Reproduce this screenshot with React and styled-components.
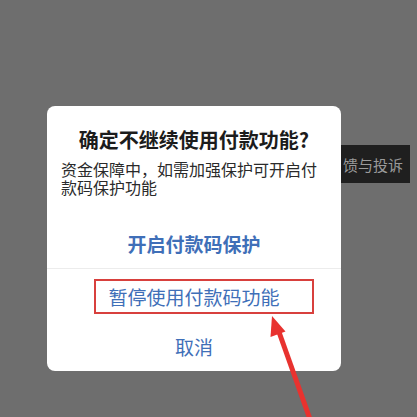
import styled, { createGlobalStyle } from "styled-components";

const GlobalStyle = createGlobalStyle`
  html, body {
    margin: 0;
    padding: 0;
    background: #6e6e6e;
  }
  body {
    font-family: "Noto Sans CJK SC", "Noto Sans", sans-serif;
  }
`;

const Screen = styled.div`
  position: relative;
  width: 417px;
  height: 417px;
  overflow: hidden;
  background: #6e6e6e;
  display: flex;
  align-items: flex-start;
  padding: 106px 0 0 47px;
  box-sizing: border-box;
`;

const Dialog = styled.div`
  width: 294px;
  height: 265px;
  background: #fff;
  border-radius: 8px;
  display: flex;
  flex-direction: column;
  flex-shrink: 0;
`;

const Title = styled.div`
  padding-top: 20px;
  font-size: 20px;
  line-height: 28px;
  font-weight: 700;
  color: #1c1c1c;
  text-align: center;
`;

const Body = styled.div`
  margin-top: 6px;
  padding: 0 14px;
  font-size: 16px;
  line-height: 18px;
  color: #2a2a2a;
`;

const Action = styled.div`
  height: ${(p) => p.$h}px;
  margin-top: ${(p) => p.$mt || 0}px;
  display: flex;
  align-items: center;
  justify-content: center;
  font-size: 19px;
  font-weight: ${(p) => (p.$bold ? 600 : 400)};
  color: #3f6fb8;
  border-top: ${(p) => (p.$divider ? "1px solid #ececec" : "none")};
`;

const Marked = styled.span`
  display: inline-block;
  margin-left: 20px;
  padding: 1px 32px 1px 12px;
  border: 2.5px solid #d8403d;
  line-height: 29px;
`;

const BehindStrip = styled.div`
  margin-top: 39px;
  width: 69px;
  height: 38px;
  background: #1f1f1f;
  color: #9a9a9a;
  font-size: 15px;
  display: flex;
  align-items: center;
  padding-left: 2px;
  box-sizing: border-box;
  white-space: nowrap;
  overflow: hidden;
`;

const Arrow = styled.svg`
  position: absolute;
  left: 0;
  top: 0;
  width: 417px;
  height: 417px;
  pointer-events: none;
`;

export default function App() {
  return (
    <>
      <GlobalStyle />
      <Screen>
        <Dialog>
          <Title>确定不继续使用付款功能?</Title>
          <Body>资金保障中，如需加强保护可开启付款码保护功能</Body>
          <Action $h={50} $mt={22} $bold>
            开启付款码保护
          </Action>
          <Action $h={54} $divider>
            <Marked>暂停使用付款码功能</Marked>
          </Action>
          <Action $h={47}>取消</Action>
        </Dialog>
        <BehindStrip>馈与投诉</BehindStrip>
        <Arrow viewBox="0 0 417 417">
          <line x1="279" y1="332" x2="311" y2="422" stroke="#e8322f" strokeWidth="5" />
          <polygon points="272,316 270.5,337 285.5,331.5" fill="#e8322f" />
        </Arrow>
      </Screen>
    </>
  );
}
